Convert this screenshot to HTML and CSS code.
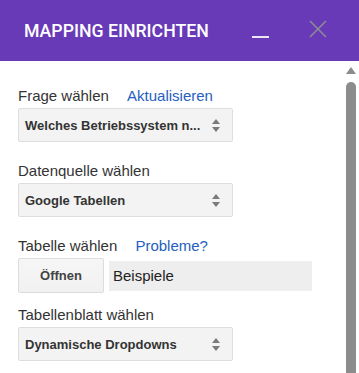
FILE: index.html
```html
<!DOCTYPE html>
<html lang="de">
<head>
<meta charset="utf-8">
<link rel="stylesheet" href="styles.css">
</head>
<body>
<div class="dialog">
  <header class="titlebar">
    <span class="title">MAPPING EINRICHTEN</span>
    <span class="minimize"></span>
    <svg class="close" width="18" height="18" viewBox="0 0 18 18"><path d="M1 1 L17 17 M17 1 L1 17" stroke="#8d8a96" stroke-width="1.6" fill="none"/></svg>
  </header>
  <div class="body">
    <main class="content">
      <div class="group">
        <div class="label">Frage wählen <a class="link">Aktualisieren</a></div>
        <div class="select"><span>Welches Betriebssystem n...</span><span class="arrows"></span></div>
      </div>
      <div class="group">
        <div class="label">Datenquelle wählen</div>
        <div class="select"><span>Google Tabellen</span><span class="arrows"></span></div>
      </div>
      <div class="group group-short">
        <div class="label">Tabelle wählen <a class="link">Probleme?</a></div>
        <div class="filerow">
          <button class="btn">Öffnen</button>
          <div class="input">Beispiele</div>
        </div>
      </div>
      <div class="group">
        <div class="label">Tabellenblatt wählen</div>
        <div class="select"><span>Dynamische Dropdowns</span><span class="arrows"></span></div>
      </div>
    </main>
    <div class="scrollbar">
      <span class="scroll-up"></span>
      <span class="thumb"></span>
    </div>
  </div>
</div>
</body>
</html>
```

FILE: styles.css
```css
html, body {
  margin: 0;
  padding: 0;
  background: #ffffff;
}
body {
  width: 359px;
  height: 373px;
  overflow: hidden;
  font-family: "Liberation Sans", Arial, sans-serif;
}
.dialog {
  display: flex;
  flex-direction: column;
  height: 373px;
}
.titlebar {
  height: 61px;
  flex: none;
  background: #683ab7;
  display: flex;
  align-items: center;
  padding-left: 24px;
  box-sizing: border-box;
}
.title {
  font-family: Roboto, "Liberation Sans", sans-serif;
  font-size: 17.7px;
  font-weight: 500;
  color: #ffffff;
  letter-spacing: 0;
  margin-top: 1px;
}
.minimize {
  width: 17px;
  height: 2px;
  background: #ece6f4;
  margin-left: 43px;
  margin-top: 12px;
}
.close {
  margin-left: 40px;
  margin-top: -3px;
}
.body {
  flex: 1;
  display: flex;
  min-height: 0;
}
.content {
  flex: 1;
  padding: 26px 0 0 18px;
}
.group {
  margin-bottom: 20px;
}
.group-short {
  margin-bottom: 13px;
}
.label {
  font-size: 15px;
  line-height: 18px;
  color: #333333;
  margin-bottom: 3px;
}
.link {
  color: #2560c0;
  margin-left: 14px;
  text-decoration: none;
}
.select {
  width: 215px;
  height: 34px;
  box-sizing: border-box;
  border: 1px solid #dedede;
  border-radius: 2px;
  background: #f3f3f3;
  display: flex;
  align-items: center;
  justify-content: space-between;
  padding: 0 12px 0 6px;
  font-size: 13px;
  font-weight: bold;
  color: #333333;
}
.arrows {
  position: relative;
  width: 8px;
  height: 13px;
}
.arrows::before,
.arrows::after {
  content: "";
  position: absolute;
  left: 0;
  border-left: 4px solid transparent;
  border-right: 4px solid transparent;
}
.arrows::before {
  top: 0;
  border-bottom: 5px solid #7a7a7a;
}
.arrows::after {
  bottom: 0;
  border-top: 5px solid #7a7a7a;
}
.filerow {
  display: flex;
  align-items: center;
  gap: 5px;
}
.btn {
  width: 86px;
  height: 35px;
  box-sizing: border-box;
  border: 1px solid #dcdcdc;
  border-radius: 2px;
  background: linear-gradient(#f6f6f6, #f1f1f1);
  font-family: "Liberation Sans", Arial, sans-serif;
  font-size: 13px;
  font-weight: bold;
  color: #444444;
  padding: 0;
}
.input {
  width: 203px;
  height: 30px;
  box-sizing: border-box;
  background: #eeeeee;
  font-size: 15px;
  color: #222222;
  padding-left: 4px;
  display: flex;
  align-items: center;
}
.scrollbar {
  width: 10px;
  margin-right: 3px;
  display: flex;
  flex-direction: column;
  align-items: center;
  padding-top: 6px;
}
.scroll-up {
  width: 0;
  height: 0;
  border-left: 5px solid transparent;
  border-right: 5px solid transparent;
  border-bottom: 7px solid #8c8c8c;
}
.thumb {
  width: 10px;
  flex: 1;
  margin-top: 8px;
  background: #8c8c8c;
  border-radius: 5px 5px 0 0;
}
```
